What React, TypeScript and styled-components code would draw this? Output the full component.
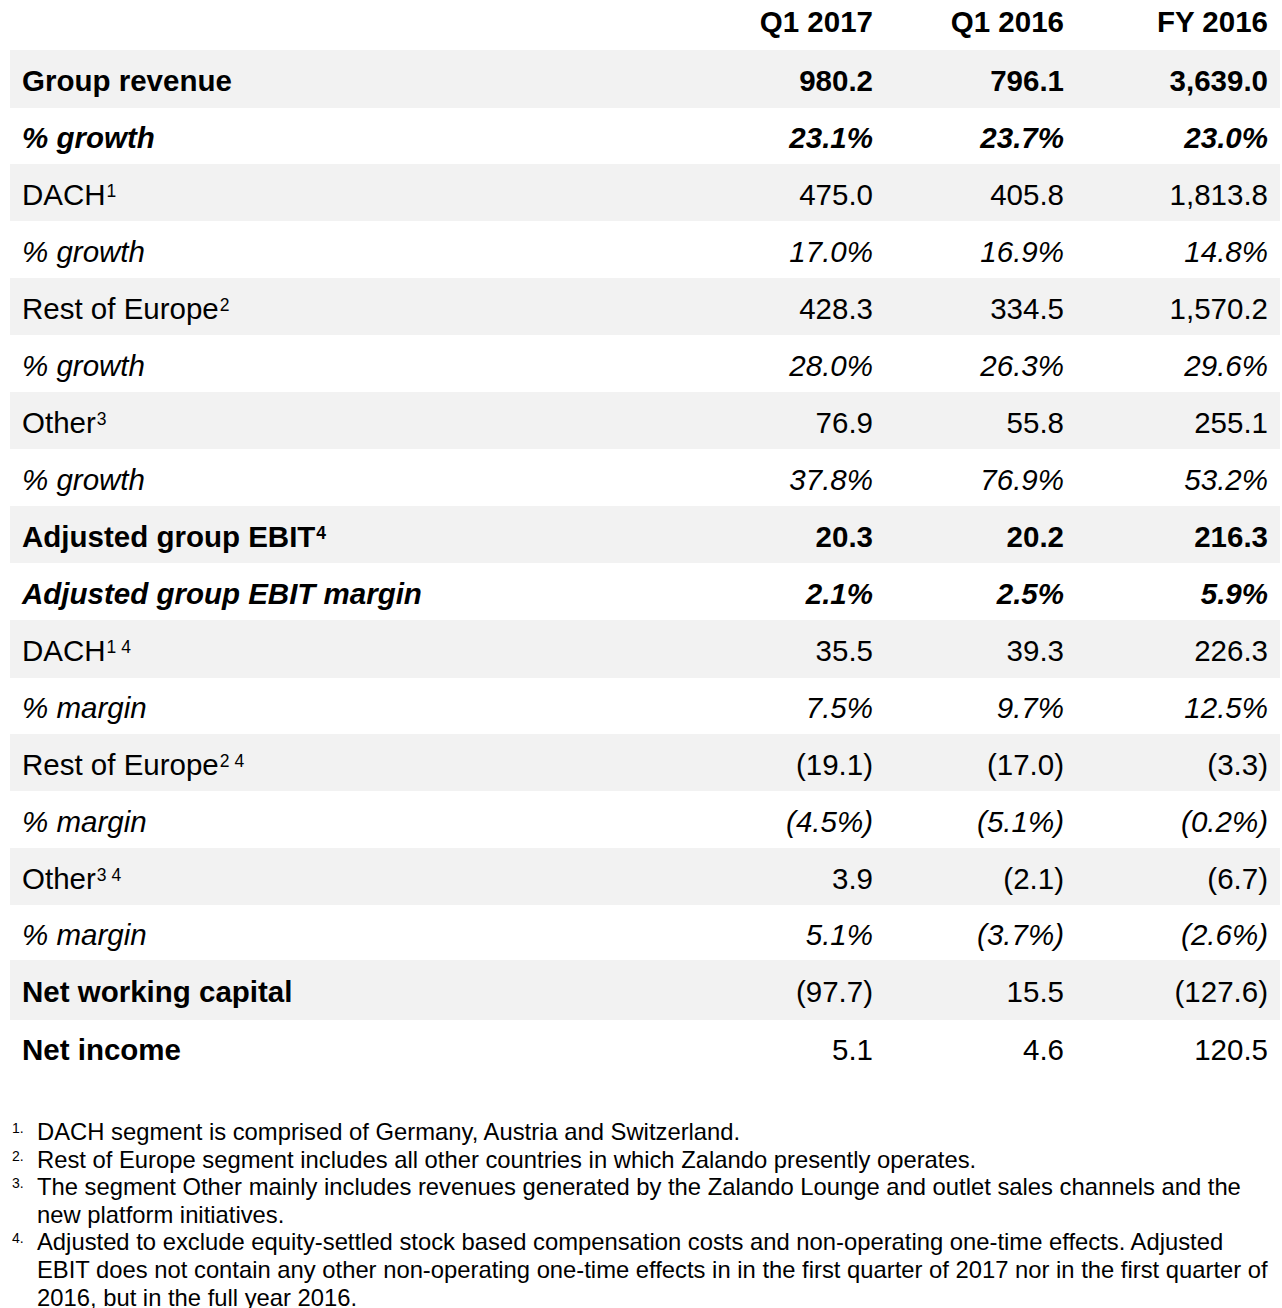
import React from "react";
import styled, { createGlobalStyle, css } from "styled-components";

const Global = createGlobalStyle`
  html, body { margin: 0; padding: 0; background: #ffffff; }
  body { font-family: "Liberation Sans", Arial, sans-serif; color: #000; }
`;

const Page = styled.div`
  width: 1282px;
  padding: 0 2px 0 10px;
  box-sizing: border-box;
`;

const Table = styled.div`
  display: flex;
  flex-direction: column;
  width: 1270px;
`;

const Row = styled.div<{ $shaded?: boolean; $h?: number }>`
  display: grid;
  grid-template-columns: 1fr 191px 191px 204px;
  align-items: center;
  box-sizing: border-box;
  padding-top: 4px;
  height: ${(p) => p.$h ?? 57}px;
  background: ${(p) => (p.$shaded ? "#f2f2f2" : "transparent")};
`;

const HeadRow = styled(Row)`
  padding-top: 0;
  padding-bottom: 6px;
`;

const styleFor = (bold?: boolean, italic?: boolean) => css`
  font-weight: ${bold ? 700 : 400};
  font-style: ${italic ? "italic" : "normal"};
`;

const Label = styled.div<{ $bold?: boolean; $italic?: boolean }>`
  padding-left: 12px;
  font-size: 29.5px;
  line-height: 34px;
  white-space: nowrap;
  ${(p) => styleFor(p.$bold, p.$italic)}
`;

const Value = styled.div<{ $bold?: boolean; $italic?: boolean }>`
  padding-right: 12px;
  text-align: right;
  font-size: 29.5px;
  line-height: 34px;
  white-space: nowrap;
  ${(p) => styleFor(p.$bold, p.$italic)}
`;

const Head = styled(Value)`
  font-weight: 700;
`;

const Sup = styled.sup`
  font-size: 17.5px;
  vertical-align: top;
  position: relative;
  top: -4px;
  margin-left: 1px;
`;

const Notes = styled.ol`
  list-style: none;
  margin: 42px 0 0 0;
  padding: 0;
  display: flex;
  flex-direction: column;
`;

const Note = styled.li`
  display: grid;
  grid-template-columns: 27px 1fr;
  font-size: 23.8px;
  line-height: 27.6px;
`;

const NoteMark = styled.span`
  font-size: 14px;
  line-height: 20px;
  padding-left: 2px;
`;

const NoteText = styled.span`
  padding-right: 0;
`;

type RowData = {
  label: string;
  sup?: string;
  values: string[];
  bold?: boolean;
  italic?: boolean;
  valueBold?: boolean;
  shaded: boolean;
  h?: number;
};

const rows: RowData[] = [
  { label: "Group revenue", values: ["980.2", "796.1", "3,639.0"], bold: true, valueBold: true, shaded: true, h: 58 },
  { label: "% growth", values: ["23.1%", "23.7%", "23.0%"], bold: true, italic: true, valueBold: true, shaded: false, h: 56 },
  { label: "DACH", sup: "1", values: ["475.0", "405.8", "1,813.8"], shaded: true },
  { label: "% growth", values: ["17.0%", "16.9%", "14.8%"], italic: true, shaded: false },
  { label: "Rest of Europe", sup: "2", values: ["428.3", "334.5", "1,570.2"], shaded: true },
  { label: "% growth", values: ["28.0%", "26.3%", "29.6%"], italic: true, shaded: false },
  { label: "Other", sup: "3", values: ["76.9", "55.8", "255.1"], shaded: true },
  { label: "% growth", values: ["37.8%", "76.9%", "53.2%"], italic: true, shaded: false },
  { label: "Adjusted group EBIT", sup: "4", values: ["20.3", "20.2", "216.3"], bold: true, valueBold: true, shaded: true },
  { label: "Adjusted group EBIT margin", values: ["2.1%", "2.5%", "5.9%"], bold: true, italic: true, valueBold: true, shaded: false },
  { label: "DACH", sup: "1 4", values: ["35.5", "39.3", "226.3"], shaded: true, h: 58 },
  { label: "% margin", values: ["7.5%", "9.7%", "12.5%"], italic: true, shaded: false, h: 56 },
  { label: "Rest of Europe", sup: "2 4", values: ["(19.1)", "(17.0)", "(3.3)"], shaded: true },
  { label: "% margin", values: ["(4.5%)", "(5.1%)", "(0.2%)"], italic: true, shaded: false },
  { label: "Other", sup: "3 4", values: ["3.9", "(2.1)", "(6.7)"], shaded: true },
  { label: "% margin", values: ["5.1%", "(3.7%)", "(2.6%)"], italic: true, shaded: false, h: 55 },
  { label: "Net working capital", values: ["(97.7)", "15.5", "(127.6)"], bold: true, shaded: true, h: 60 },
  { label: "Net income", values: ["5.1", "4.6", "120.5"], bold: true, shaded: false, h: 56 },
];

const notes: [string, string][] = [
  ["1.", "DACH segment is comprised of Germany, Austria and Switzerland."],
  ["2.", "Rest of Europe segment includes all other countries in which Zalando presently operates."],
  ["3.", "The segment Other mainly includes revenues generated by the Zalando Lounge and outlet sales channels and the new platform initiatives."],
  ["4.", "Adjusted to exclude equity-settled stock based compensation costs and non-operating one-time effects. Adjusted EBIT does not contain any other non-operating one-time effects in in the first quarter of 2017 nor in the first quarter of 2016, but in the full year 2016."],
];

export default function App() {
  return (
    <Page>
      <Global />
      <Table>
        <HeadRow $h={50}>
          <div />
          <Head>Q1 2017</Head>
          <Head>Q1 2016</Head>
          <Head>FY 2016</Head>
        </HeadRow>
        {rows.map((r, i) => (
          <Row key={i} $shaded={r.shaded} $h={r.h}>
            <Label $bold={r.bold} $italic={r.italic}>
              {r.label}
              {r.sup && <Sup>{r.sup}</Sup>}
            </Label>
            {r.values.map((v, j) => (
              <Value key={j} $bold={r.valueBold} $italic={r.italic}>
                {v}
              </Value>
            ))}
          </Row>
        ))}
      </Table>
      <Notes>
        {notes.map(([m, t]) => (
          <Note key={m}>
            <NoteMark>{m}</NoteMark>
            <NoteText>{t}</NoteText>
          </Note>
        ))}
      </Notes>
    </Page>
  );
}
